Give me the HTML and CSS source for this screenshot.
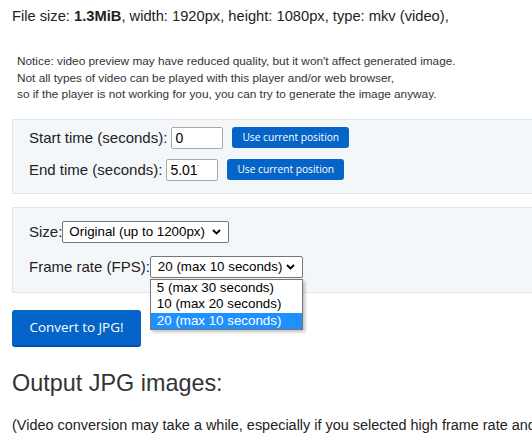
FILE: index.html
```html
<!DOCTYPE html>
<html>
<head>
<meta charset="utf-8">
<link rel="stylesheet" href="styles.css">
</head>
<body>
<div class="page">
  <p class="info">File size: <b>1.3MiB</b>, width: 1920px, height: 1080px, type: mkv (video),</p>
  <p class="notice">Notice: video preview may have reduced quality, but it won't affect generated image.<br>Not all types of video can be played with this player and/or web browser,<br>so if the player is not working for you, you can try to generate the image anyway.</p>

  <div class="panel panel-time">
    <div class="row">
      <span class="label">Start time (seconds):</span>
      <input class="num" type="text" value="0">
      <button class="btn-small" type="button">Use current position</button>
    </div>
    <div class="row">
      <span class="label">End time (seconds):</span>
      <input class="num" type="text" value="5.017">
      <button class="btn-small" type="button">Use current position</button>
    </div>
  </div>

  <div class="panel panel-opts">
    <div class="row">
      <span class="label">Size:</span>
      <div class="select select-size">
        <span class="sel-text">Original (up to 1200px)</span>
        <svg class="chev" width="9" height="6" viewBox="0 0 9 6"><polyline points="1,1 4.5,4.5 8,1" fill="none" stroke="#000" stroke-width="1.8"/></svg>
      </div>
    </div>
    <div class="row">
      <span class="label">Frame rate (FPS):</span>
      <div class="select select-fps">
        <span class="sel-text">20 (max 10 seconds)</span>
        <svg class="chev" width="9" height="6" viewBox="0 0 9 6"><polyline points="1,1 4.5,4.5 8,1" fill="none" stroke="#000" stroke-width="1.8"/></svg>
        <ul class="dropdown">
          <li>5 (max 30 seconds)</li>
          <li>10 (max 20 seconds)</li>
          <li class="active">20 (max 10 seconds)</li>
        </ul>
      </div>
    </div>
  </div>

  <button class="btn-convert" type="button">Convert to JPG!</button>

  <h2 class="out-title">Output JPG images:</h2>
  <p class="out-note">(Video conversion may take a while, especially if you selected high frame rate and long duration)</p>
</div>
</body>
</html>
```
FILE: styles.css
```css
html, body {
  margin: 0;
  padding: 0;
  background: #fff;
  overflow: hidden;
}
body {
  font-family: "Liberation Sans", Arial, sans-serif;
  color: #222;
}
.page {
  width: 900px;
  padding: 8px 0 0 12px;
}
.info {
  margin: 0;
  font-size: 14.7px;
  line-height: 17px;
  color: #222;
}
.notice {
  margin: 28px 0 0 5px;
  font-size: 11.8px;
  line-height: 16.6px;
  color: #333;
}
.panel {
  background: #f4f7fa;
  border: 1px solid #e1e5e9;
  border-right: none;
}
.panel-time {
  margin-top: 16px;
  padding: 7px 0 12px 16px;
  display: flex;
  flex-direction: column;
  gap: 10px;
}
.panel-opts {
  margin-top: 13px;
  padding: 13px 0 14px 16px;
  display: flex;
  flex-direction: column;
  gap: 13px;
}
.row {
  display: flex;
  align-items: center;
  height: 22px;
}
.label {
  font-size: 15px;
  line-height: 17px;
  color: #222;
}
.num {
  box-sizing: border-box;
  width: 52px;
  height: 22px;
  margin: 0 0 0 4px;
  padding: 0 18px 0 3px;
  border: 1px solid #a9a9a9;
  border-radius: 2px;
  background: #fff;
  font-family: "Liberation Sans", Arial, sans-serif;
  font-size: 14px;
  color: #000;
  outline: none;
}
.btn-small {
  box-sizing: border-box;
  height: 21px;
  margin-left: 9px;
  padding: 0 10px;
  border: none;
  border-radius: 3px;
  background: #0564c8;
  color: #fff;
  font-family: "Open Sans", sans-serif;
  font-size: 10.2px;
  line-height: 21px;
  white-space: nowrap;
}
.select {
  position: relative;
  box-sizing: border-box;
  height: 22px;
  display: flex;
  align-items: center;
  justify-content: space-between;
  background: #fff;
  border: 1px solid #767676;
  border-radius: 2px;
  font-size: 13.33px;
  color: #000;
}
.select-size {
  width: 167px;
  padding: 0 7px 0 6px;
}
.select-fps {
  width: 153px;
  padding: 0 7px 0 7px;
}
.sel-text {
  white-space: nowrap;
  line-height: 16px;
}
.chev {
  display: block;
}
.dropdown {
  position: absolute;
  left: -1px;
  top: 22px;
  box-sizing: border-box;
  width: 153px;
  margin: 0;
  padding: 0;
  list-style: none;
  background: #fff;
  border: 1px solid #767676;
  box-shadow: 2px 2px 3px rgba(0,0,0,0.25);
  z-index: 5;
}
.dropdown li {
  height: 16.5px;
  line-height: 16.5px;
  padding-left: 6px;
  font-size: 13.33px;
  color: #000;
  white-space: nowrap;
}
.dropdown li.active {
  background: #1e90ff;
  color: #fff;
}
.btn-convert {
  display: block;
  box-sizing: border-box;
  margin-top: 17px;
  width: 129px;
  height: 37px;
  padding: 0;
  border: none;
  border-bottom: 2px solid #0452a8;
  border-radius: 3px;
  background: #0564c8;
  color: #fff;
  font-family: "Open Sans", sans-serif;
  font-size: 13.4px;
}
.out-title {
  margin: 21px 0 0;
  font-size: 23.4px;
  line-height: 30px;
  font-weight: normal;
  color: #333;
}
.out-note {
  margin: 19px 0 0;
  font-size: 14.45px;
  line-height: 17px;
  color: #222;
  white-space: nowrap;
}
```
